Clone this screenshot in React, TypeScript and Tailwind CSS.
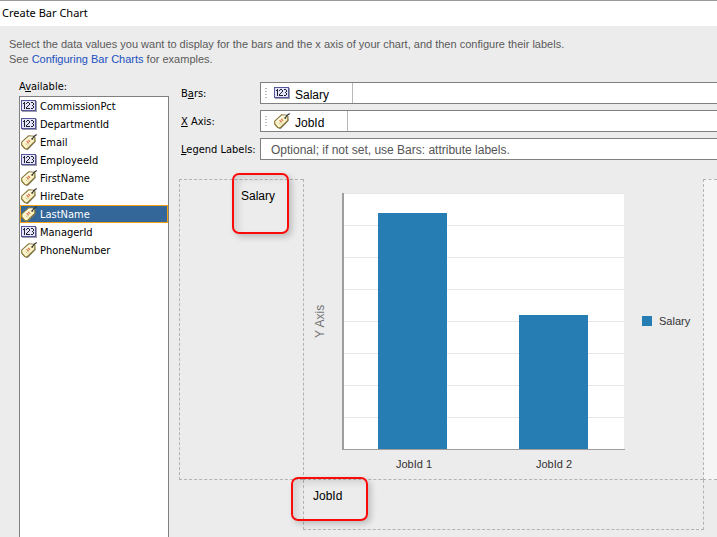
import { useState, type ReactNode } from "react";

const uiFont = "font-['DejaVu_Sans_Condensed','DejaVu_Sans',sans-serif] text-[11px]";
const arial = "font-['Liberation_Sans',Arial,sans-serif]";
const fieldLabel = "w-[81px] shrink-0 pt-0.5 pl-0.5 whitespace-nowrap";

type Kind = "number" | "tag";

const attributes: { name: string; kind: Kind }[] = [
  { name: "CommissionPct", kind: "number" },
  { name: "DepartmentId", kind: "number" },
  { name: "Email", kind: "tag" },
  { name: "EmployeeId", kind: "number" },
  { name: "FirstName", kind: "tag" },
  { name: "HireDate", kind: "tag" },
  { name: "LastName", kind: "tag" },
  { name: "ManagerId", kind: "number" },
  { name: "PhoneNumber", kind: "tag" },
];

function NumberIcon() {
  return (
    <svg width="16" height="16" viewBox="0 0 16 16" className="shrink-0" shapeRendering="crispEdges" aria-hidden="true">
      <rect x="1" y="3" width="15" height="11" fill="#9c9caa" />
      <rect x="0" y="2" width="15" height="11" fill="#55559a" />
      <rect x="1" y="3" width="13" height="9" fill="#e4e4fa" />
      <g fill="#22222c">
        <path d="M2 5h1v-1h1v7h-1v-5h-1z" />
        <path d="M5 5h1v-1h2v1h1v2h-1v1h-1v1h-1v1h3v1h-4v-2h1v-1h1v-1h1v-2h-2v1h-1z" />
        <path d="M10 5v-1h2v1h1v2h-1v1h1v2h-1v1h-2v-1h2v-2h-1v-1h1v-2z" />
      </g>
    </svg>
  );
}

function TagIcon() {
  return (
    <svg width="16" height="16" viewBox="0 0 16 16" className="shrink-0" aria-hidden="true">
      <path d="M1.500 12 5 15.700h2L14.500 8V5l-1 3-8 7z" fill="#77746c" />
      <path d="M.7 8.300 7.800 1.800l5.200.5.900 1.200-.1 3.900-7.700 7.500-2.400-.4L.7 11z" fill="#fbf5c8" stroke="#8a7836" strokeWidth="1.200" strokeLinejoin="round" />
      <path d="M1.700 8.900 8.200 3l3.800.2" fill="none" stroke="#fffef4" strokeWidth="1.200" />
      <path d="m4.500 9.500 2 2M6.200 9l2 1.500" stroke="#b9b196" strokeWidth=".8" />
      <path d="m5.600 7.200 2 2M7.300 5.900l1.800 1.900" stroke="#e06a50" strokeWidth="1.200" />
      <circle cx="11.200" cy="5" r="1.100" fill="#68614d" />
      <path d="M11.200 5 13 2.400 15.700.5" fill="none" stroke="#383838" strokeWidth="1.200" />
    </svg>
  );
}

function KindIcon({ kind }: { kind: Kind }) {
  return kind === "number" ? <NumberIcon /> : <TagIcon />;
}

function FieldRow({ label, children }: { label: ReactNode; children: ReactNode }) {
  return (
    <div className="flex items-center">
      {label}
      {children}
    </div>
  );
}

function DropField({ labelId, kind, value }: { labelId: string; kind: Kind; value: string }) {
  return (
    <div role="group" aria-labelledby={labelId} className="flex h-[22px] min-w-0 flex-1 border border-r-0 border-[#808080] bg-white">
      <button type="button" className={`flex items-center border-r border-[#b8b8b8] pr-[23px] pl-1 text-xs text-black ${arial}`}>
        <svg width="2" height="12" viewBox="0 0 2 12" className="mr-[7px]" shapeRendering="crispEdges" aria-hidden="true">
          <path d="M0 1.500h2M0 4.500h2M0 7.500h2M0 10.500h2" stroke="#bdbdbd" />
        </svg>
        <KindIcon kind={kind} />
        <span className="ml-[5px] pt-[3px]">{value}</span>
      </button>
    </div>
  );
}

function BarChart() {
  const gridLines = [45, 77, 109, 141, 173, 205, 237];
  return (
    <svg viewBox="0 0 399 299" className={`block h-[299px] w-full ${arial}`} role="img" aria-label="Salary by JobId">
      <g shapeRendering="crispEdges">
        <rect x="39" y="13" width="281" height="256" fill="#fff" />
        <rect x="40" y="13" width="280" height="1" fill="#e6e6e9" />
        {gridLines.map((y) => (
          <rect key={y} x="40" y={y} width="280" height="1" fill="#e6e6e9" />
        ))}
        <rect x="74" y="33" width="69" height="236" fill="#267db3" />
        <rect x="215" y="135" width="69" height="134" fill="#267db3" />
        <rect x="38" y="13" width="2" height="257" fill="#9e9e9e" />
        <rect x="38" y="269" width="283" height="1" fill="#9e9e9e" />
        <rect x="338" y="136" width="10" height="10" fill="#267db3" />
      </g>
      <g fontSize="11" fill="#333">
        <text x="110" y="288" textAnchor="middle">JobId 1</text>
        <text x="250" y="288" textAnchor="middle">JobId 2</text>
        <text x="355" y="145">Salary</text>
      </g>
      <text transform="translate(20 158) rotate(-90)" fontSize="12" fill="#737373">Y Axis</text>
    </svg>
  );
}

const callout =
  "pointer-events-none absolute rounded-[7px] border-2 border-[#fb0a0a] shadow-[3px_3px_6px_rgba(0,0,0,0.2),inset_5px_4px_6px_rgba(0,0,0,0.1)]";

export default function App() {
  const [selected, setSelected] = useState("LastName");

  return (
    <div className={`flex min-h-screen flex-col overflow-hidden bg-[#ececec] text-black ${uiFont}`}>
      <header className="h-[26px] border-t border-[#999] bg-white px-0.5">
        <h1 className="font-['Noto_Sans','Open_Sans',sans-serif] leading-6">Create Bar Chart</h1>
      </header>

      <p className={`px-[9px] pt-[11px] leading-[15px] text-[#5a5a5a] ${arial}`}>
        Select the data values you want to display for the bars and the x axis of your chart, and then configure their labels.
        <br />
        See <a href="#help" className="text-[#2050c0]">Configuring Bar Charts</a> for examples.
      </p>

      <main className="mt-3 flex flex-1 gap-[10px] pl-[19px]">
        <section className="flex w-[150px] shrink-0 flex-col">
          <h2 id="available" className="h-[17px] leading-4">A<u>v</u>ailable:</h2>
          <ul aria-labelledby="available" className="flex-1 border border-b-0 border-[#808080] bg-white">
            {attributes.map(({ name, kind }) => (
              <li key={name}>
                <button
                  type="button"
                  aria-pressed={selected === name}
                  onClick={() => setSelected(name)}
                  className={`flex h-[18px] w-full items-center gap-[3px] border text-left ${
                    selected === name ? "border-[#f5a214] bg-[#336699] text-white" : "border-transparent"
                  }`}
                >
                  <KindIcon kind={kind} />
                  <span className="pt-0.5">{name}</span>
                </button>
              </li>
            ))}
          </ul>
        </section>

        <section className="min-w-0 flex-1 pt-[3px]">
          <form className="flex flex-col gap-1.5">
            <FieldRow label={<span id="bars" className={fieldLabel}>B<u>a</u>rs:</span>}>
              <DropField labelId="bars" kind="number" value="Salary" />
            </FieldRow>
            <FieldRow label={<span id="x-axis" className={fieldLabel}><u>X</u> Axis:</span>}>
              <DropField labelId="x-axis" kind="tag" value="JobId" />
            </FieldRow>
            <FieldRow label={<label htmlFor="legend" className={fieldLabel}><u>L</u>egend Labels:</label>}>
              <input
                id="legend"
                type="text"
                placeholder="Optional; if not set, use Bars: attribute labels."
                className={`h-[22px] min-w-0 flex-1 border border-r-0 border-[#808080] bg-white pt-0.5 pl-[10px] text-xs placeholder:text-[#555] ${arial}`}
              />
            </FieldRow>
          </form>

          <div className={`mt-[19px] grid grid-cols-[124px_minmax(0,1fr)_14px] text-xs leading-4 ${arial}`}>
            <div className="relative border border-r-0 border-dashed border-[#b3b3b3] pt-2 pl-[61px]">
              Salary
              <div className={`${callout} -top-[7px] left-[52px] h-[61px] w-[57px]`} />
            </div>
            <div className="border-b border-l border-dashed border-[#b3b3b3] pt-px">
              <BarChart />
            </div>
            <div className="border border-r-0 border-dashed border-[#b3b3b3] bg-[#f5f5f5]" />
            <div className="relative col-start-2 -mr-px h-[50px] border border-t-0 border-dashed border-[#b3b3b3] pt-2 pl-[9px]">
              JobId
              <div className={`${callout} -top-[3px] -left-[13px] h-[44px] w-[77px]`} />
            </div>
          </div>
        </section>
      </main>
    </div>
  );
}
